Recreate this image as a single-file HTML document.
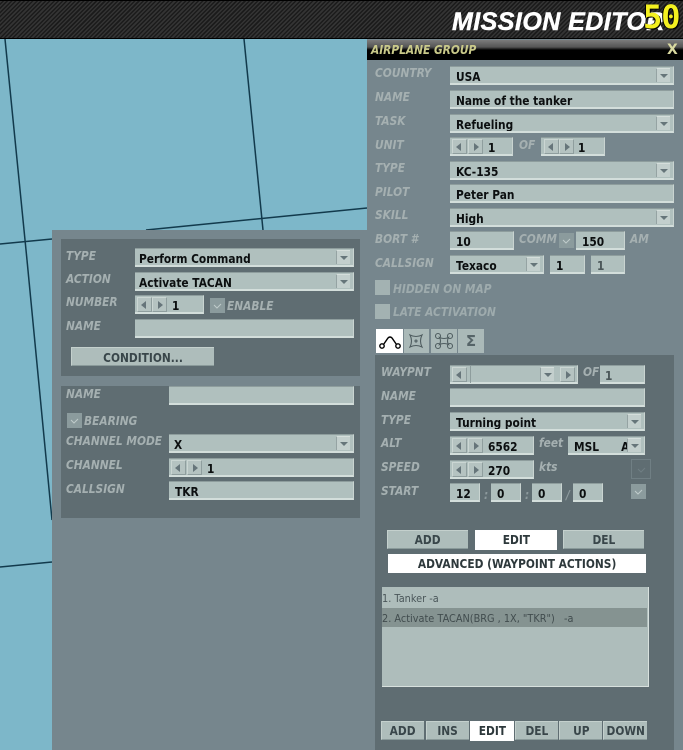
<!DOCTYPE html>
<html><head><meta charset="utf-8">
<style>
html,body{margin:0;padding:0}
body{width:683px;height:750px;overflow:hidden;position:relative;background:#7db7c9;font-family:"DejaVu Sans","Liberation Sans",sans-serif}
div,span,svg{position:absolute;box-sizing:border-box}
.l{font:italic bold 12px/14px "DejaVu Sans",sans-serif;color:#a5b0b1;white-space:nowrap;transform:scaleX(.885);transform-origin:0 0}
.f{background:#b0c0be;border-bottom:2px solid #d3dedb;border-top:1px solid #8e9d9d;border-right:1px solid #c9d4d1;font:bold 12px/21px "DejaVu Sans",sans-serif;color:#0c0f10;padding-left:6px;white-space:pre;height:19px;overflow:hidden}
.f b,.b b{display:inline-block;font-weight:bold;transform:scaleX(.885);transform-origin:0 0}
.b b{transform-origin:50% 0}
.dd{background:#b0c0be;border-bottom:2px solid #d3dedb;border-top:1px solid #8e9d9d;border-right:1px solid #c9d4d1;height:19px}
.ar{width:14px;height:14px;background:#c3cfcd;border-left:1px solid #95a3a3;border-top:1px solid #d5dedb}
.ar:after{content:"";position:absolute;left:3px;top:5px;border-left:4px solid transparent;border-right:4px solid transparent;border-top:4px solid #66757a}
.s{width:15px;height:15px;background:#b5c3c1;border:1px solid #cbd6d3;border-right-color:#8f9e9e;border-bottom-color:#8f9e9e}
.sl:after,.sr:after{content:"";position:absolute;top:3px;border-top:4px solid transparent;border-bottom:4px solid transparent}
.sl:after{left:3px;border-right:5px solid #66757a}
.sr:after{left:5px;border-left:5px solid #66757a}
.c{width:15px;height:15px;background:#8b9b9d}
.c svg{left:2px;top:2px}
.b{background:#aebdbb;border-top:1px solid #c4d0cd;border-left:1px solid #c4d0cd;border-bottom:1px solid #8a9a9a;font:bold 12px/19px "DejaVu Sans",sans-serif;color:#39464a;text-align:center;height:19px;white-space:nowrap}
.w{background:#fff;color:#2d383b;border-color:#fff}
.t{height:24px;top:329px;background:#aab9b8}
.li{font:11px/15px 'DejaVu Sans',sans-serif;white-space:pre;transform:scaleX(.885);transform-origin:0 0}
</style></head><body>
<svg style="left:0;top:0" width="683" height="750">
<g stroke="#123a4c" stroke-width="1.5" fill="none">
<line x1="5" y1="39" x2="27" y2="260"/><line x1="27" y1="260" x2="52" y2="520"/>
<line x1="244" y1="39" x2="263" y2="230"/>
<line x1="0" y1="244" x2="52" y2="239"/><line x1="146" y1="230" x2="367" y2="208"/>
<line x1="0" y1="567" x2="52" y2="562"/>
</g></svg>

<!-- top bar -->
<div style="left:0;top:0;width:683px;height:39px;background:repeating-linear-gradient(135deg,#343434 0,#343434 1.5px,#1b1b1b 1.5px,#1b1b1b 3px);border-top:1px solid #000;border-bottom:1px solid #000"></div>
<div style="left:452px;top:7px;font:italic bold 25px/30px 'Liberation Sans',sans-serif;letter-spacing:.45px;color:#fff;white-space:nowrap;-webkit-text-stroke:.5px #fff">MISSION EDITOR</div>
<div style="left:643px;top:0;font:bold 32px/34px 'DejaVu Sans Mono',monospace;color:#f4f020;white-space:nowrap;letter-spacing:-1px;text-shadow:1px 1px 0 #000,-1px 0 0 #000">50</div>

<!-- left panel -->
<div style="left:52px;top:230px;width:315px;height:520px;background:#76868d"></div>
<div style="left:61px;top:239px;width:299px;height:137px;background:#5f6d72"></div>
<div style="left:61px;top:386px;width:299px;height:132px;background:#5f6d72"></div>

<div class="l" style="left:66px;top:249px">TYPE</div>
<div class="f" style="left:135px;top:248px;width:219px;padding-left:4px"><b>Perform Command</b></div><div class="ar" style="left:336px;top:250px"></div>
<div class="l" style="left:66px;top:272px">ACTION</div>
<div class="f" style="left:135px;top:272px;width:219px;padding-left:4px"><b>Activate TACAN</b></div><div class="ar" style="left:336px;top:274px"></div>
<div class="l" style="left:66px;top:295px">NUMBER</div>
<div class="f" style="left:135px;top:295px;width:69px;padding-left:37px"><b>1</b></div><div class="s sl" style="left:137px;top:297px"></div><div class="s sr" style="left:152px;top:297px"></div>
<div class="c" style="left:210px;top:298px"><svg width="11" height="11"><path d="M2 5l3 3 4-4" stroke="#c0cccb" fill="none"/></svg></div>
<div class="l" style="left:227px;top:299px">ENABLE</div>
<div class="l" style="left:66px;top:319px">NAME</div>
<div class="f" style="left:135px;top:319px;width:219px"></div>
<div class="b" style="left:71px;top:347px;width:143px;line-height:20px"><b>CONDITION...</b></div>

<div class="l" style="left:66px;top:387px">NAME</div>
<div class="f" style="left:169px;top:386px;width:185px"></div>
<div class="c" style="left:67px;top:413px"><svg width="11" height="11"><path d="M2 5l3 3 4-4" stroke="#c0cccb" fill="none"/></svg></div>
<div class="l" style="left:84px;top:414px">BEARING</div>
<div class="l" style="left:66px;top:434px">CHANNEL MODE</div>
<div class="f" style="left:169px;top:434px;width:185px;padding-left:5px"><b>X</b></div><div class="ar" style="left:336px;top:436px"></div>
<div class="l" style="left:66px;top:458px">CHANNEL</div>
<div class="f" style="left:169px;top:458px;width:185px;padding-left:38px"><b>1</b></div><div class="s sl" style="left:171px;top:460px"></div><div class="s sr" style="left:187px;top:460px"></div>
<div class="l" style="left:66px;top:482px">CALLSIGN</div>
<div class="f" style="left:169px;top:481px;width:185px"><b>TKR</b></div>

<!-- right panel -->
<div style="left:367px;top:39px;width:316px;height:711px;background:#76868d"></div>
<div style="left:367px;top:40px;width:316px;height:20px;background:linear-gradient(#7b7b7b 0,#555 35%,#000 50%,#000 100%)"></div>
<div class="l" style="left:371px;top:43px;color:#c9c98a">AIRPLANE GROUP</div>
<div style="left:667px;top:42px;font:bold 14px/16px 'DejaVu Sans',sans-serif;color:#d8d8a0">X</div>

<div class="l" style="left:375px;top:66px">COUNTRY</div>
<div class="f" style="left:450px;top:66px;width:224px"><b>USA</b></div><div class="ar" style="left:656px;top:68px"></div>
<div class="l" style="left:375px;top:90px">NAME</div>
<div class="f" style="left:450px;top:90px;width:224px"><b>Name of the tanker</b></div>
<div class="l" style="left:375px;top:114px">TASK</div>
<div class="f" style="left:450px;top:114px;width:224px"><b>Refueling</b></div><div class="ar" style="left:656px;top:116px"></div>
<div class="l" style="left:375px;top:138px">UNIT</div>
<div class="f" style="left:450px;top:137px;width:63px;padding-left:38px"><b>1</b></div><div class="s sl" style="left:452px;top:139px"></div><div class="s sr" style="left:468px;top:139px"></div>
<div class="l" style="left:519px;top:138px">OF</div>
<div class="f" style="left:541px;top:137px;width:64px;padding-left:37px"><b>1</b></div><div class="s sl" style="left:544px;top:139px"></div><div class="s sr" style="left:559px;top:139px"></div>
<div class="l" style="left:375px;top:161px">TYPE</div>
<div class="f" style="left:450px;top:161px;width:224px"><b>KC-135</b></div><div class="ar" style="left:656px;top:163px"></div>
<div class="l" style="left:375px;top:185px">PILOT</div>
<div class="f" style="left:450px;top:184px;width:224px"><b>Peter Pan</b></div>
<div class="l" style="left:375px;top:208px">SKILL</div>
<div class="f" style="left:450px;top:208px;width:224px"><b>High</b></div><div class="ar" style="left:656px;top:210px"></div>
<div class="l" style="left:375px;top:232px">BORT #</div>
<div class="f" style="left:450px;top:231px;width:64px"><b>10</b></div>
<div class="l" style="left:519px;top:232px">COMM</div>
<div class="c" style="left:559px;top:233px"><svg width="11" height="11"><path d="M2 5l3 3 4-4" stroke="#c0cccb" fill="none"/></svg></div>
<div class="f" style="left:576px;top:231px;width:49px"><b>150</b></div>
<div class="l" style="left:630px;top:232px">AM</div>
<div class="l" style="left:375px;top:256px">CALLSIGN</div>
<div class="f" style="left:450px;top:255px;width:94px"><b>Texaco</b></div><div class="ar" style="left:526px;top:257px"></div>
<div class="f" style="left:550px;top:255px;width:35px"><b>1</b></div>
<div class="f" style="left:591px;top:255px;width:34px;color:#4b5759"><b>1</b></div>
<div style="left:375px;top:280px;width:15px;height:15px;background:#a3b2b2"></div>
<div class="l" style="left:393px;top:282px;color:#9eabad">HIDDEN ON MAP</div>
<div style="left:375px;top:304px;width:15px;height:15px;background:#a3b2b2"></div>
<div class="l" style="left:393px;top:305px;color:#9eabad">LATE ACTIVATION</div>

<!-- tabs -->
<div class="t" style="left:376px;width:27px;background:#fff"><svg width="27" height="24"><g fill="none" stroke="#000" stroke-width="1.4"><circle cx="6" cy="17" r="2.2"/><circle cx="22" cy="17" r="2.2"/><path d="M7.5 15.500 12 9q2-2 4 0l4.500 6.500"/></g></svg></div>
<div class="t" style="left:404px;width:25px"><svg width="25" height="24"><g fill="none" stroke="#4f5d60" stroke-width="1.1"><path d="M6 6q6 3 12 0q-3 6 0 12q-6-3-12 0q3-6 0-12z"/><circle cx="12" cy="12" r="1"/></g></svg></div>
<div class="t" style="left:431px;width:26px"><svg width="26" height="24"><g fill="none" stroke="#4f5d60" stroke-width="1.1"><path d="M8.500 8.500q4.500 2 9 0q-2 3.500 0 7q-4.500-2-9 0q2-3.500 0-7z"/><circle cx="7" cy="7" r="2.500"/><circle cx="19" cy="7" r="2.500"/><circle cx="7" cy="17" r="2.500"/><circle cx="19" cy="17" r="2.500"/></g></svg></div>
<div class="t" style="left:458px;width:26px;font:bold 15px/24px 'DejaVu Sans',sans-serif;color:#566468;text-align:center">Σ</div>

<div style="left:375px;top:355px;width:299px;height:395px;background:#5f6d72"></div>
<div class="l" style="left:381px;top:365px">WAYPNT</div>
<div class="dd" style="left:450px;top:365px;width:128px"></div>
<div class="s sl" style="left:452px;top:367px"></div>
<div class="ar" style="left:540px;top:367px"></div>
<div style="left:470px;top:365px;width:1px;height:18px;background:#8e9d9d"></div>
<div class="s sr" style="left:560px;top:367px"></div>
<div class="l" style="left:583px;top:365px">OF</div>
<div class="f" style="left:600px;top:365px;width:45px;padding-left:5px;color:#4b5759"><b>1</b></div>
<div class="l" style="left:381px;top:389px">NAME</div>
<div class="f" style="left:450px;top:388px;width:195px"></div>
<div class="l" style="left:381px;top:413px">TYPE</div>
<div class="f" style="left:450px;top:412px;width:195px"><b>Turning point</b></div><div class="ar" style="left:627px;top:414px"></div>
<div class="l" style="left:381px;top:436px">ALT</div>
<div class="f" style="left:450px;top:436px;width:84px;padding-left:38px"><b>6562</b></div><div class="s sl" style="left:452px;top:438px"></div><div class="s sr" style="left:468px;top:438px"></div>
<div class="l" style="left:539px;top:436px">feet</div>
<div class="f" style="left:568px;top:436px;width:77px;padding-left:6px"><b>MSL      A</b></div><div class="ar" style="left:627px;top:438px"></div>
<div class="l" style="left:381px;top:460px">SPEED</div>
<div class="f" style="left:450px;top:460px;width:84px;padding-left:38px"><b>270</b></div><div class="s sl" style="left:452px;top:462px"></div><div class="s sr" style="left:468px;top:462px"></div>
<div class="l" style="left:539px;top:460px">kts</div>
<div style="left:631px;top:459px;width:20px;height:20px;background:#5f6d72;border:1px solid #707f84"><svg style="left:4px;top:4px" width="11" height="11"><path d="M2 5l3 3 4-4" stroke="#6f7e83" fill="none"/></svg></div>
<div class="l" style="left:381px;top:484px">START</div>
<div class="f" style="left:450px;top:483px;width:30px"><b>12</b></div>
<div class="l" style="left:484px;top:488px;color:#8d9a9d">:</div>
<div class="f" style="left:491px;top:483px;width:30px"><b>0</b></div>
<div class="l" style="left:525px;top:488px;color:#8d9a9d">:</div>
<div class="f" style="left:532px;top:483px;width:30px"><b>0</b></div>
<div class="l" style="left:566px;top:488px;color:#8d9a9d">/</div>
<div class="f" style="left:573px;top:483px;width:30px"><b>0</b></div>
<div class="c" style="left:631px;top:484px;background:#8b9b9d"><svg width="11" height="11"><path d="M2 5l3 3 4-4" stroke="#c0cccb" fill="none"/></svg></div>

<div class="b" style="left:387px;top:530px;width:81px"><b>ADD</b></div>
<div class="b w" style="left:475px;top:530px;width:82px;height:20px"><b>EDIT</b></div>
<div class="b" style="left:563px;top:530px;width:81px"><b>DEL</b></div>
<div class="b w" style="left:388px;top:554px;width:258px"><b>ADVANCED (WAYPOINT ACTIONS)</b></div>

<div style="left:382px;top:587px;width:267px;height:100px;background:#aebdbb;border-right:1px solid #d8e1de;border-bottom:1px solid #d8e1de"></div>
<div style="left:382px;top:608px;width:265px;height:19px;background:#859391"></div>
<div class="li" style="left:382px;top:591px;color:#4a5659">1. Tanker -a</div>
<div class="li" style="left:382px;top:611px;color:#414c4e">2. Activate TACAN(BRG , 1X, "TKR")   -a</div>

<div class="b" style="left:381px;top:721px;width:43px"><b>ADD</b></div>
<div class="b" style="left:426px;top:721px;width:43px"><b>INS</b></div>
<div class="b w" style="left:470px;top:721px;width:44px;height:20px"><b>EDIT</b></div>
<div class="b" style="left:515px;top:721px;width:43px"><b>DEL</b></div>
<div class="b" style="left:559px;top:721px;width:43px"><b>UP</b></div>
<div class="b" style="left:603px;top:721px;width:44px"><b>DOWN</b></div>
</body></html>
